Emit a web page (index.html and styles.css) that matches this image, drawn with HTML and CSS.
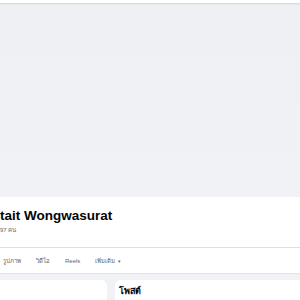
FILE: index.html
```html
<!DOCTYPE html>
<html lang="th">
<head>
<meta charset="utf-8">
<title>tait Wongwasurat</title>
<link rel="stylesheet" href="styles.css">
</head>
<body>
<div class="topbar"></div>
<section class="profile-head">
  <div class="cover"></div>
  <div class="info">
    <h1 class="name">tait Wongwasurat</h1>
    <div class="friends">97 คน</div>
  </div>
  <nav class="tabs">
    <span class="tab">รูปภาพ</span>
    <span class="tab">วิดีโอ</span>
    <span class="tab">Reels</span>
    <span class="tab">เพิ่มเติม <span class="caret">▾</span></span>
  </nav>
</section>
<main class="content">
  <div class="card card-left"></div>
  <div class="card card-right">
    <h2 class="card-title">โพสต์</h2>
  </div>
</main>
</body>
</html>
```
FILE: styles.css
```css
html, body {
  margin: 0;
  padding: 0;
}
body {
  width: 300px;
  height: 300px;
  overflow: hidden;
  background: #f0f2f5;
  font-family: "Liberation Sans", Arial, sans-serif;
  color: #050505;
}
.topbar {
  height: 3px;
  background: #ffffff;
  box-shadow: 0 1px 2px rgba(0, 0, 0, 0.12);
  position: relative;
  z-index: 2;
}
.profile-head {
  background: #ffffff;
  box-shadow: 0 1px 1px rgba(0, 0, 0, 0.06);
}
.cover {
  height: 194px;
  background: linear-gradient(#eff0f4, #f1f2f6);
}
.info {
  padding: 11px 0 0 0;
  height: 39px;
  border-bottom: 1px solid #dddfe2;
}
.name {
  margin: 0;
  font-size: 13.5px;
  line-height: 16px;
  font-weight: bold;
  color: #050505;
}
.friends {
  margin-top: 2px;
  font-size: 6px;
  line-height: 8px;
  color: #65676b;
}
.tabs {
  display: flex;
  align-items: center;
  gap: 15px;
  height: 25px;
  padding-left: 3px;
  font-size: 6px;
  color: #65676b;
}
.caret {
  font-size: 5px;
  margin-left: 1px;
}
.content {
  display: grid;
  grid-template-columns: 107px 1fr;
  gap: 8px;
  padding-top: 7px;
}
.card {
  background: #ffffff;
  height: 20px;
}
.card-left {
  border-top-right-radius: 6px;
}
.card-right {
  border-top-left-radius: 6px;
  padding: 5px 4px 0;
}
.card-title {
  margin: 0;
  font-size: 9px;
  line-height: 12px;
  font-weight: bold;
  color: #050505;
}
```
